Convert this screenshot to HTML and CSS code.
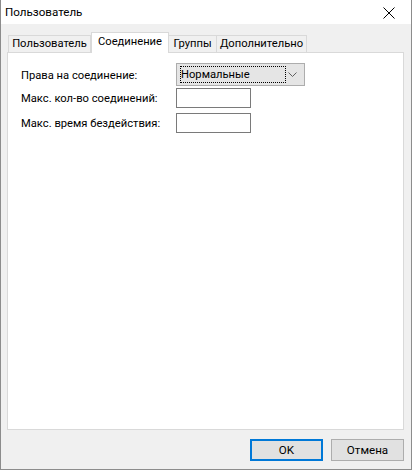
FILE: index.html
```html
<!DOCTYPE html>
<html lang="ru">
<head>
<meta charset="utf-8">
<title>Пользователь</title>
<link rel="stylesheet" href="styles.css">
</head>
<body>
<div class="window">
  <div class="titlebar">
    <span class="title">Пользователь</span>
    <span class="close">
      <svg width="12" height="12" viewBox="0 0 12 12"><path d="M0.5 0.5 L11.5 11.5 M11.5 0.5 L0.5 11.5" stroke="#000" stroke-width="1" fill="none"/></svg>
    </span>
  </div>
  <div class="body">
    <div class="tabs">
      <div class="tab t1">Пользователь</div>
      <div class="tab sel">Соединение</div>
      <div class="tab t3">Группы</div>
      <div class="tab t4">Дополнительно</div>
    </div>
    <div class="panel">
      <div class="row r1">
        <span class="label">Права на соединение:</span>
        <div class="combo">
          <span class="focus">Нормальные</span>
          <svg class="chev" width="9" height="5" viewBox="0 0 9 5"><path d="M0.5 0.5 L4.5 4.5 L8.5 0.5" stroke="#606060" stroke-width="1" fill="none"/></svg>
        </div>
      </div>
      <div class="row r2">
        <span class="label">Макс. кол-во соединений:</span>
        <div class="edit"></div>
      </div>
      <div class="row r3">
        <span class="label">Макс. время бездействия:</span>
        <div class="edit"></div>
      </div>
    </div>
    <div class="buttons">
      <button class="btn default">OK</button>
      <button class="btn">Отмена</button>
    </div>
  </div>
</div>
</body>
</html>
```
FILE: styles.css
```css
html, body {
  margin: 0;
  padding: 0;
  background: #f0f0f0;
}
body {
  font-family: Roboto, "Noto Sans", sans-serif;
  font-size: 11.2px;
  color: #000;
}
.window {
  box-sizing: border-box;
  width: 412px;
  height: 470px;
  border: 1px solid #8c8c8c;
  border-top: none;
  display: flex;
  flex-direction: column;
  background: #f0f0f0;
}
.titlebar {
  height: 25px;
  background: #fff;
  display: flex;
  align-items: center;
  justify-content: space-between;
  padding-left: 4px;
  padding-right: 16px;
}
.title {
  font-size: 11.6px;
  line-height: 16px;
}
.close {
  display: flex;
  width: 12px;
  height: 12px;
  margin-top: 1px;
}
.body {
  flex: 1;
  display: flex;
  flex-direction: column;
  padding: 8px 7px 8px 6px;
}
.tabs {
  display: flex;
  align-items: flex-end;
  height: 20px;
  padding-left: 1px;
  position: relative;
  z-index: 1;
}
.tab {
  box-sizing: border-box;
  height: 17px;
  border: 1px solid #d9d9d9;
  border-bottom: none;
  background: #f0f0f0;
  text-align: center;
  line-height: 16px;
  white-space: nowrap;
}
.t1 { width: 83px; }
.sel {
  width: 78px;
  height: 21px;
  background: #fff;
  margin-bottom: -1px;
  line-height: 17px;
}
.t3 { width: 48px; border-left: none; }
.t4 { width: 90px; border-left: none; }
.panel {
  box-sizing: border-box;
  height: 378px;
  background: #fff;
  border: 1px solid #d9d9d9;
  padding: 10px 0 0 13px;
  display: flex;
  flex-direction: column;
}
.row {
  display: flex;
  align-items: center;
}
.label {
  width: 155px;
  line-height: 16px;
  padding-top: 2px;
}
.r1 { height: 23px; }
.r2 { height: 20px; margin-top: 2px; }
.r3 { height: 20px; margin-top: 5px; }
.combo {
  box-sizing: border-box;
  width: 129px;
  height: 23px;
  background: #e5e5e5;
  border: 1px solid #adadad;
  display: flex;
  align-items: center;
  justify-content: space-between;
  padding: 0 7px 0 3px;
}
.focus {
  box-sizing: border-box;
  width: 106px;
  height: 17px;
  border: 1px dotted #000;
  line-height: 15px;
  padding-left: 0;
}
.chev { display: block; }
.edit {
  box-sizing: border-box;
  width: 75px;
  height: 20px;
  border: 1px solid #7a7a7a;
  background: #fff;
}
.buttons {
  display: flex;
  justify-content: flex-end;
  gap: 8px;
  margin-top: 9px;
}
.btn {
  box-sizing: border-box;
  width: 73px;
  height: 22px;
  border: 1px solid #adadad;
  background: #e1e1e1;
  font-family: Roboto, "Noto Sans", sans-serif;
  font-size: 11.6px;
  color: #000;
  padding: 0;
  margin: 0;
}
.btn.default {
  border: 2px solid #0078d7;
}
```
